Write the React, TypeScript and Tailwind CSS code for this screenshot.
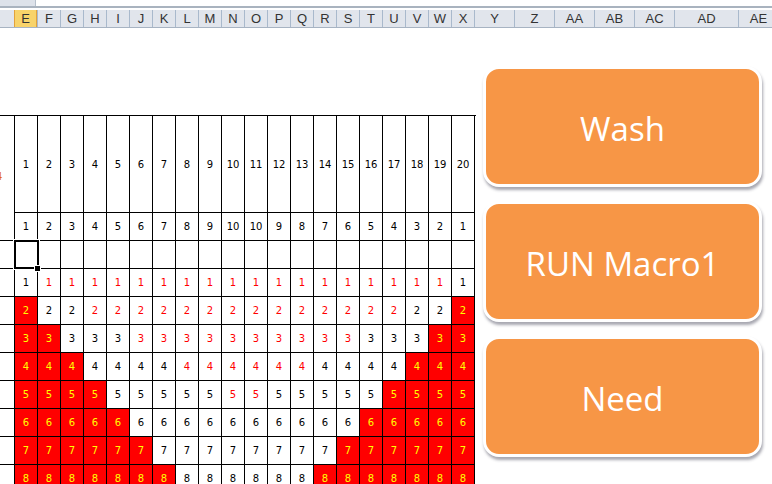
import React from "react";

const narrowCols = ["E", "F", "G", "H", "I", "J", "K", "L", "M", "N", "O", "P", "Q", "R", "S", "T", "U", "V", "W", "X"];
const wideCols = [
    { name: "Y", w: "w-[40px]" },
    { name: "Z", w: "w-[40px]" },
    { name: "AA", w: "w-[40px]" },
    { name: "AB", w: "w-[40px]" },
    { name: "AC", w: "w-[40px]" },
    { name: "AD", w: "w-[64px]" },
    { name: "AE", w: "w-[40px]" },
];

const cols = Array.from({ length: 20 }, (_, i) => i + 1);
const mirror = [1, 2, 3, 4, 5, 6, 7, 8, 9, 10, 10, 9, 8, 7, 6, 5, 4, 3, 2, 1];

// colour of a step cell: red fill on the edges, black band next to it, red text in the middle
function cellStyle(k: number, c: number) {
    const red = c <= k - 1 || c >= 22 - k;
    if (red) return "bg-[#ff0000] text-[#ffff00]";
    const black = (c >= k && c <= 2 * k - 1) || (c >= 22 - 2 * k && c <= 21 - k);
    return black ? "text-black" : "text-[#ff0000]";
}

function Cell({ children, className = "", last = false }: { children?: React.ReactNode; className?: string; last?: boolean }) {
    return (
        <div
            className={`${last ? "w-[24px] border-r" : "w-[23px]"} border-l border-b border-black flex items-center justify-center shrink-0 ${className}`}
        >
            {children}
        </div>
    );
}

function Button({ label }: { label: string }) {
    return (
        <div className="h-[121px] w-[279px] rounded-[16px] border-[3px] border-white bg-[#f79646] shadow-[1px_3px_3px_rgba(60,60,80,0.45)] flex items-center justify-center pt-1">
            <span className="text-white text-[33px] font-['Open_Sans',sans-serif]">{label}</span>
        </div>
    );
}

export default function App() {
    return (
        <div className="w-[772px] h-[484px] overflow-hidden bg-white font-['DejaVu_Sans',sans-serif]">
            {/* top strip */}
            <div className="h-[8px] flex border-b-2 border-[#a9b3bf]">
                <div className="w-[36px] bg-[#dde2ea] border-r border-[#b6c0cc]"></div>
            </div>
            <div className="h-[2px] bg-white"></div>

            {/* column headers */}
            <div className="h-[18px] flex bg-[#e1e5ec] border-b border-[#a7b3c2] text-[13px] text-[#333] font-['Liberation_Sans',sans-serif]">
                <div className="w-[14px] shrink-0"></div>
                {narrowCols.map((c) => (
                    <div
                        key={c}
                        className={`w-[23px] shrink-0 border-l flex items-center justify-center ${c === "E" ? "bg-[#f8d36a] border-[#e3a23a] border-r" : "border-[#a9b9cc]"}`}
                    >
                        {c}
                    </div>
                ))}
                {wideCols.map((c) => (
                    <div key={c.name} className={`${c.w} shrink-0 border-l border-[#a9b9cc] flex items-center justify-center`}>
                        {c.name}
                    </div>
                ))}
            </div>

            <div className="flex">
                {/* sheet grid */}
                <div className="mt-[87px] w-[476px] shrink-0 border-t border-black text-[10px]">
                    {/* row with column numbers */}
                    <div className="flex h-[97px]">
                        <div className="w-[14px] shrink-0 overflow-hidden flex items-center pt-6">
                            <span className="-ml-[4px] text-[#e46c0a]">4</span>
                        </div>
                        {cols.map((c) => (
                            <Cell key={c} last={c === 20}>{c}</Cell>
                        ))}
                    </div>
                    <div className="flex h-[28px]">
                        <div className="w-[14px] shrink-0 border-b border-black"></div>
                        {cols.map((c) => (
                            <Cell key={c} last={c === 20}>{mirror[c - 1]}</Cell>
                        ))}
                    </div>
                    <div className="flex h-[28px]">
                        <div className="w-[14px] shrink-0 border-b border-black"></div>
                        {cols.map((c) => (
                            <Cell key={c} last={c === 20} className={c === 1 ? "relative" : ""}>
                                {c === 1 && (
                                    <>
                                        <div className="absolute -left-px -top-px w-[25px] h-[29px] border-2 border-black outline outline-1 outline-white"></div>
                                        <div className="absolute -right-[3px] -bottom-[3px] w-[5px] h-[5px] bg-black outline outline-1 outline-white"></div>
                                    </>
                                )}
                            </Cell>
                        ))}
                    </div>
                    {[1, 2, 3, 4, 5, 6, 7, 8].map((k) => (
                        <div key={k} className="flex h-[28px]">
                            <div className="w-[14px] shrink-0 border-b border-black"></div>
                            {cols.map((c) => (
                                <Cell key={c} last={c === 20} className={cellStyle(k, c)}>{k}</Cell>
                            ))}
                        </div>
                    ))}
                </div>

                {/* macro buttons */}
                <div className="ml-[7px] mt-[38px] flex flex-col gap-[14px]">
                    <Button label="Wash" />
                    <Button label="RUN Macro1" />
                    <Button label="Need" />
                </div>
            </div>
        </div>
    );
}
